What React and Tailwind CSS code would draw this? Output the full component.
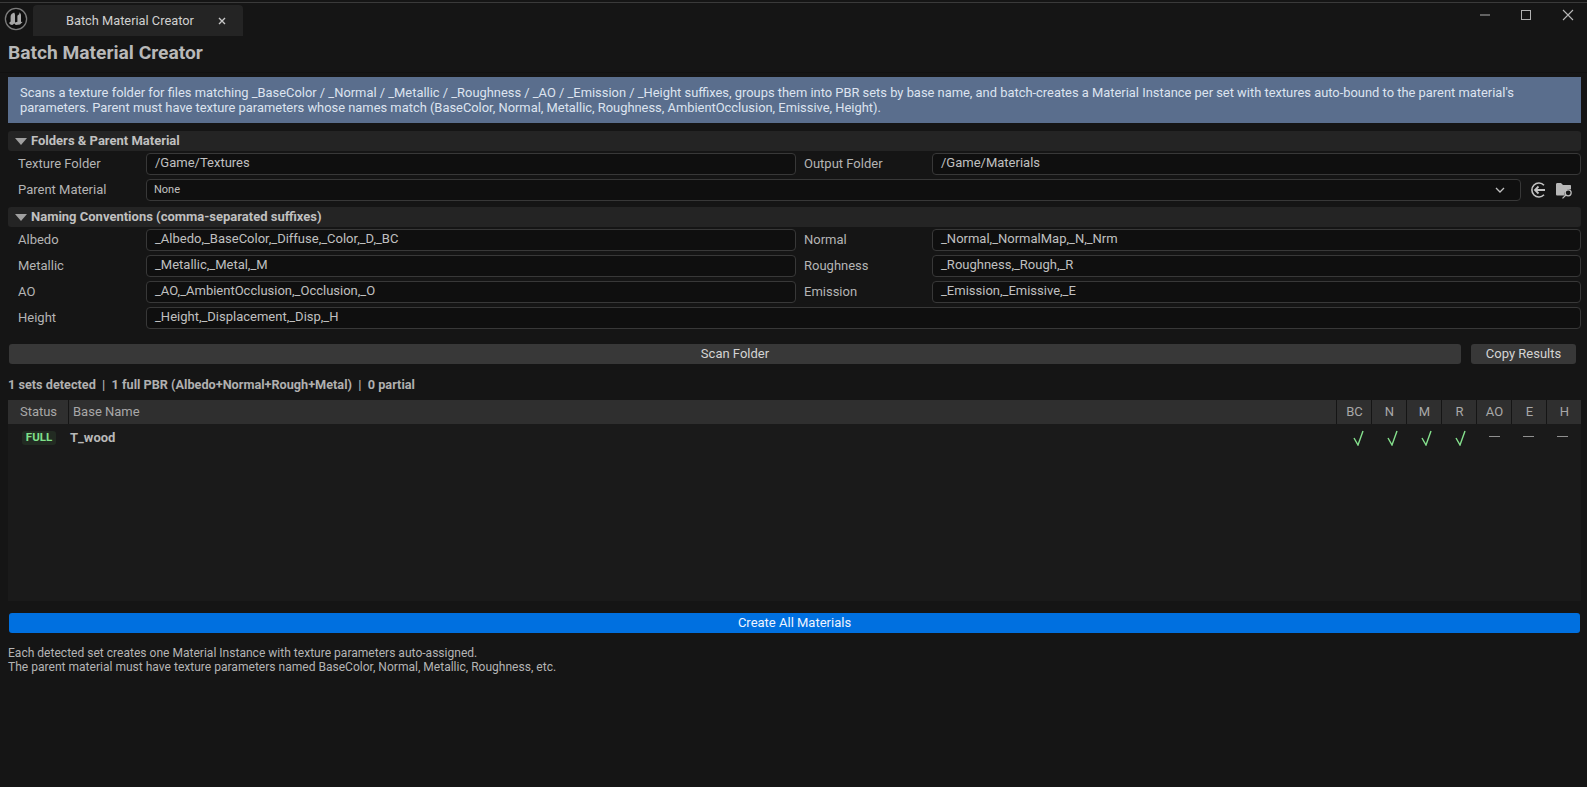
const font = { fontFamily: "Roboto, sans-serif" };

const Section = ({ title }) => (
  <div className="h-5 bg-[#242424] rounded-[3px] flex items-center pl-[7px] gap-[4px]">
    <svg width="12" height="7" viewBox="0 0 12 7"><path d="M0 0H12L6 7Z" fill="#a0a0a0" /></svg>
    <span className="text-[13px] font-bold text-[#c0c0c0] leading-none -mt-px">{title}</span>
  </div>
);

const Field = ({ value, small, children }) => (
  <div className="h-[22px] bg-[#0f0f0f] border border-[#383838] rounded-[4px] flex items-center pl-2 pr-3 justify-between min-w-0">
    <span className={small ? "text-[11px] text-[#c0c0c0] -ml-px" : "text-[13px] text-[#c0c0c0] -mt-[2px]"}>{value}</span>
    {children}
  </div>
);

const Label = ({ children, inner }) => (
  <div className={inner ? "pl-2 -mt-px text-[13px] text-[#b4b4b4] self-center" : "pl-[10px] -mt-px text-[13px] text-[#b4b4b4] self-center"}>{children}</div>
);

const UELogo = () => (
  <svg width="24" height="24" viewBox="0 0 24 24" className="shrink-0">
    <circle cx="12" cy="12" r="10.6" fill="#0e0e0e" stroke="#7c7c7c" strokeWidth="1.3" />
    <path d="M10.2 5.4C8 6 6.6 7.6 6.6 9.4V14.4L5 16C6 17.4 7.4 18.2 8.8 17.8L10.2 16.6L11.8 18L16 17.4L19 14.4C18.2 14.9 17.6 15 17 14.8V8.2C17 7 16.4 6 15.2 5.2C15.6 6.4 15.4 7 14.8 7.6L13.4 8.8V14.8L11 15.6V8C11 6.8 10.4 6 10.2 5.4Z" fill="#a8a8a8" />
  </svg>
);

const BrowseIcon = () => (
  <svg width="18" height="18" viewBox="0 0 18 18">
    <path d="M1 3.5C1 2.7 1.5 2 2.4 2H6L8 4H15C15.6 4 16 4.4 16 5V8.6C13.5 7.6 10 9 9.6 12C9.5 13 9.7 13.5 10 14.5H2.4C1.5 14.5 1 14 1 13.2Z" fill="#b8b8b8" />
    <circle cx="13.2" cy="11.8" r="3" fill="none" stroke="#c0c0c0" strokeWidth="1.2" />
    <path d="M11 14L7.5 17.4" stroke="#c0c0c0" strokeWidth="1.2" />
  </svg>
);

const UseIcon = () => (
  <svg width="18" height="18" viewBox="0 0 18 18" fill="none" stroke="#c4c4c4">
    <path d="M15 4.2A7 7 0 1 0 15 13.8" strokeWidth="1.6" />
    <path d="M16 9H6M9.5 5.5L6 9L9.5 12.5" strokeWidth="1.8" />
  </svg>
);

const columns = ["BC", "N", "M", "R", "AO", "E", "H"];
const marks = [true, true, true, true, false, false, false];

export default function App() {
  return (
    <div style={font} className="w-[1587px] h-[787px] bg-[#151515] overflow-hidden flex flex-col text-[#c0c0c0]">
      {/* title bar */}
      <div className="h-[36px] shrink-0 border-t border-[#3a3a3a] mt-[2px] flex items-start">
        <div className="pl-1 pt-[4px]"><UELogo /></div>
        <div className="ml-[5px] mt-[2px] w-[210px] h-[31px] bg-[#242424] rounded-t-[4px] flex items-center pl-[33px] pr-[17px] justify-between">
          <span className="text-[12.8px] text-[#d0d0d0]">Batch Material Creator</span>
          <svg width="8" height="8" viewBox="0 0 8 8" stroke="#c8c8c8" strokeWidth="1.4"><path d="M1 1L7 7M7 1L1 7" /></svg>
        </div>
        <div className="ml-auto flex items-center h-[24px] pr-[13px] gap-[31px]">
          <svg width="10" height="2" viewBox="0 0 10 2"><path d="M0 1H10" stroke="#b0b0b0" /></svg>
          <svg width="10" height="10" viewBox="0 0 10 10"><rect x="0.5" y="0.5" width="9" height="9" fill="none" stroke="#b0b0b0" /></svg>
          <svg width="12" height="12" viewBox="0 0 12 12"><path d="M1 1L11 11M11 1L1 11" stroke="#b8b8b8" strokeWidth="1.1" /></svg>
        </div>
      </div>

      {/* heading */}
      <div className="h-[35px] shrink-0 pl-2 pb-[4px] flex items-center border-b border-[#111]">
        <h1 className="text-[19.2px] font-bold text-[#b8b8b8] leading-none">Batch Material Creator</h1>
      </div>

      <div className="flex flex-col px-2 pr-[6px] pt-[4px]">
        <div className="h-[46px] bg-[#5a6e8d] pl-3 pt-2 text-[12.9px] leading-[15px] text-[#dde4f0]">
          Scans a texture folder for files matching _BaseColor / _Normal / _Metallic / _Roughness / _AO / _Emission / _Height suffixes, groups them into PBR sets by base name, and batch-creates a Material Instance per set with textures auto-bound to the parent material's parameters. Parent must have texture parameters whose names match (BaseColor, Normal, Metallic, Roughness, AmbientOcclusion, Emissive, Height).
        </div>

        <div className="mt-2"><Section title="Folders & Parent Material" /></div>
        <div className="grid grid-cols-[138px_650px_136px_1fr] gap-y-1 mt-[2px]">
          <Label>Texture Folder</Label>
          <Field value="/Game/Textures" />
          <Label inner>Output Folder</Label>
          <Field value="/Game/Materials" />
          <Label>Parent Material</Label>
          <div className="col-span-3 flex items-center">
            <div className="flex-1 min-w-0">
              <Field value="None" small>
                <svg width="10" height="6" viewBox="0 0 10 6" fill="none" stroke="#c0c0c0" strokeWidth="1.3" className="mr-[3px]"><path d="M1 1L5 5L9 1" /></svg>
              </Field>
            </div>
            <div className="flex items-center gap-2 ml-[8px] mr-[8px]"><UseIcon /><BrowseIcon /></div>
          </div>
        </div>

        <div className="mt-[6px]"><Section title="Naming Conventions (comma-separated suffixes)" /></div>
        <div className="grid grid-cols-[138px_650px_136px_1fr] gap-y-1 mt-[2px]">
          <Label>Albedo</Label>
          <Field value="_Albedo,_BaseColor,_Diffuse,_Color,_D,_BC" />
          <Label inner>Normal</Label>
          <Field value="_Normal,_NormalMap,_N,_Nrm" />
          <Label>Metallic</Label>
          <Field value="_Metallic,_Metal,_M" />
          <Label inner>Roughness</Label>
          <Field value="_Roughness,_Rough,_R" />
          <Label>AO</Label>
          <Field value="_AO,_AmbientOcclusion,_Occlusion,_O" />
          <Label inner>Emission</Label>
          <Field value="_Emission,_Emissive,_E" />
          <Label>Height</Label>
          <div className="col-span-3"><Field value="_Height,_Displacement,_Disp,_H" /></div>
        </div>

        <div className="flex gap-[10px] mt-[15px] pl-px pr-[5px]">
          <button className="flex-1 h-5 bg-[#383838] rounded-[3px] text-[13px] text-[#d4d4d4]">Scan Folder</button>
          <button className="w-[105px] h-5 bg-[#383838] rounded-[3px] text-[13px] text-[#d4d4d4]">Copy Results</button>
        </div>

        <div className="mt-[14px] h-[14px] flex items-center text-[12.7px] font-bold text-[#b0b0b0] whitespace-pre">1 sets detected  |  1 full PBR (Albedo+Normal+Rough+Metal)  |  0 partial</div>

        <div className="mt-[8px] flex flex-col h-[201px] bg-[#1a1a1a]">
          <div className="h-6 shrink-0 bg-[#2f2f2f] flex text-[13px] text-[#a8a8a8]">
            <div className="w-[61px] flex items-center justify-center pl-[1px] border-r border-[#151515]">Status</div>
            <div className="flex-1 flex items-center pl-1">Base Name</div>
            {columns.map((c) => (
              <div key={c} className="w-[35px] flex items-center justify-center border-l border-[#151515] pl-px">{c}</div>
            ))}
          </div>
          <div className="h-[27px] flex items-center pr-[7px]">
            <div className="w-[61px] flex justify-center pl-[1px]">
              <span className="bg-[#222b22] rounded-[3px] px-1 h-[14px] flex items-center text-[11.5px] font-bold text-[#7fe08a]">FULL</span>
            </div>
            <div className="flex-1 pl-[1px] text-[13px] font-bold text-[#b8b8b8]">T_wood</div>
            {marks.map((m, i) => (
              <div key={i} className="w-[34px] flex items-center justify-center pl-[10px]">
                {m ? (
                  <svg width="11" height="16" viewBox="0 0 11 16" fill="none" stroke="#85e08d" strokeWidth="1.4"><path d="M1 8L5 15L10 1" /></svg>
                ) : (
                  <div className="w-[11px] h-[1.5px] bg-[#909090] -mt-[2px]" />
                )}
              </div>
            ))}
          </div>
        </div>

        <button className="mt-[12px] mx-px h-5 bg-[#0070e0] rounded-[3px] text-[13px] text-[#eef4ff]">Create All Materials</button>

        <p className="mt-[13px] text-[12.05px] leading-[14px] text-[#b4b4b4]">
          Each detected set creates one Material Instance with texture parameters auto-assigned.<br />
          The parent material must have texture parameters named BaseColor, Normal, Metallic, Roughness, etc.
        </p>
      </div>
    </div>
  );
}
